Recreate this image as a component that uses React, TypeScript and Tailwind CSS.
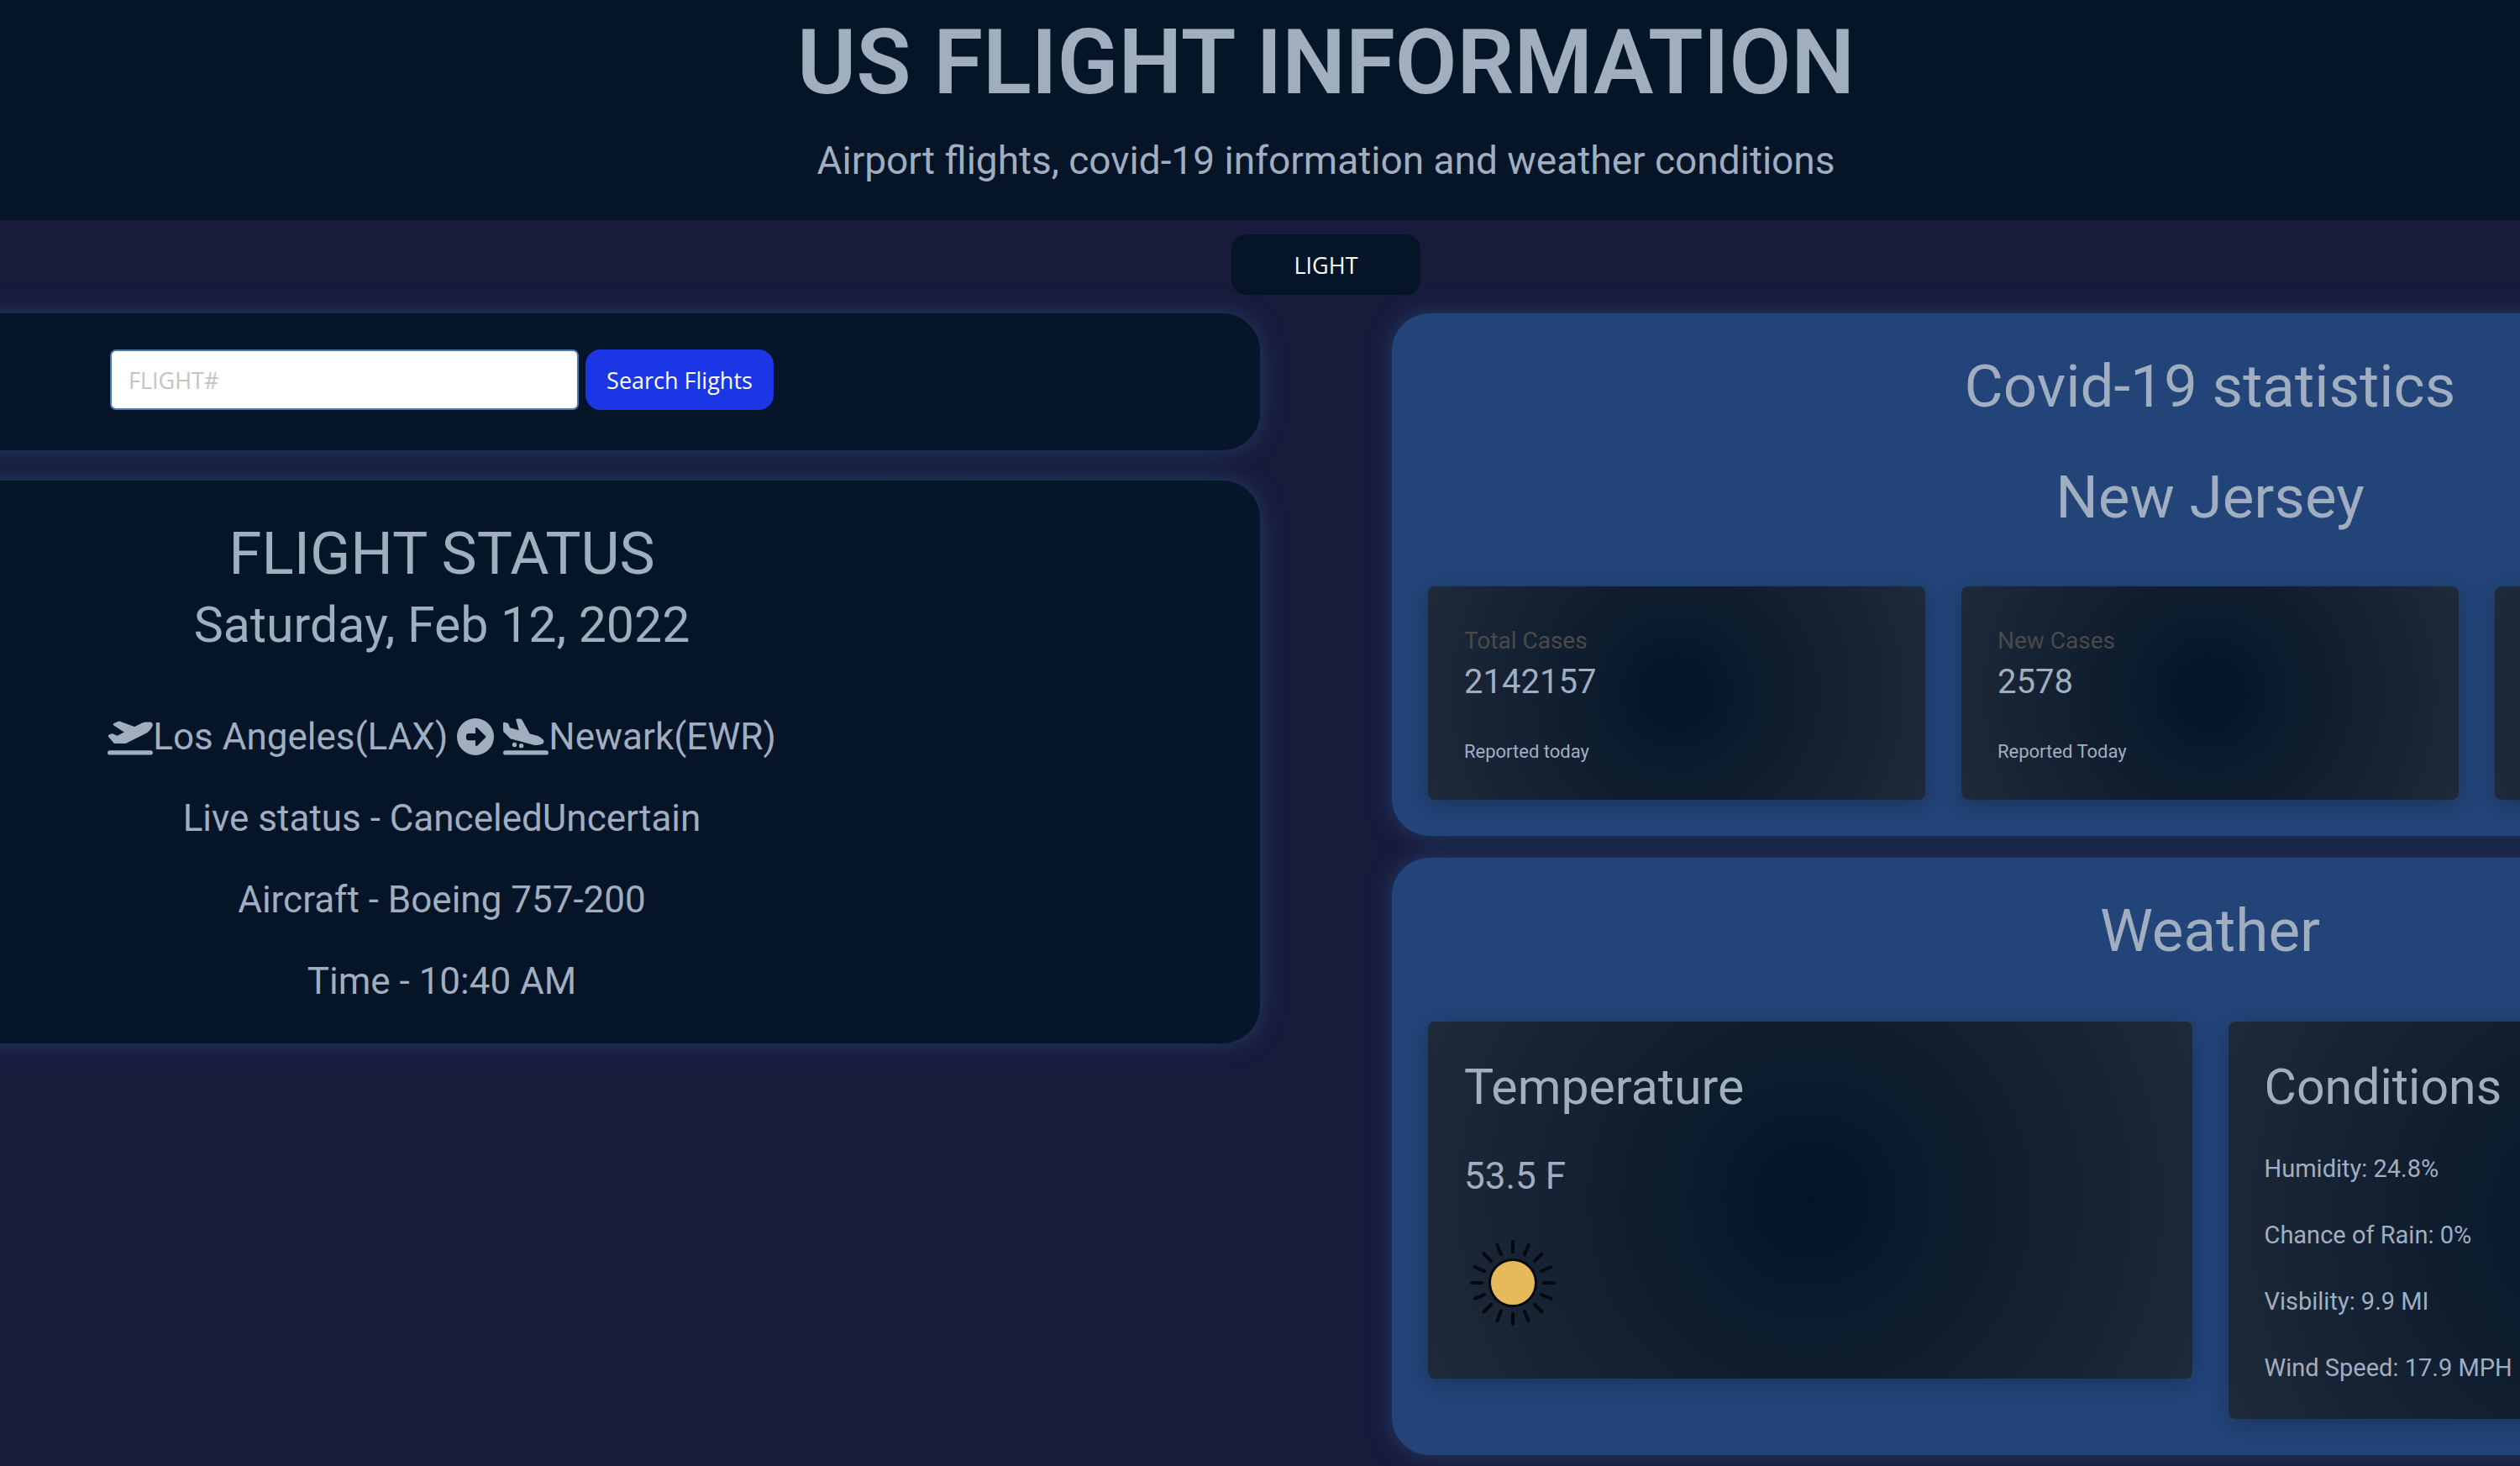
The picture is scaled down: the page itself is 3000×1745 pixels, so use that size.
import type { ReactNode } from "react";
import { FaCircleRight, FaPlaneArrival, FaPlaneDeparture } from "react-icons/fa6";

const headingClass = "text-center text-[71px] leading-[82px]";
const glow = "shadow-[0_0_28px_#203d68]";

function DarkPanel({ children, className }: { children: ReactNode; className: string }) {
  return (
    <section
      className={`rounded-[45px] bg-[radial-gradient(circle,#051427_0%,#07152a_100%)] ${glow} ${className}`}
    >
      {children}
    </section>
  );
}

function BluePanel({ children }: { children: ReactNode }) {
  return (
    <section className={`rounded-[45px] bg-[#224478] px-[43px] pt-[46px] pb-[43px] ${glow}`}>
      {children}
    </section>
  );
}

function Card({ children, className = "" }: { children?: ReactNode; className?: string }) {
  return (
    <div
      className={`rounded-[8px] bg-[radial-gradient(circle,#041428_0%,#1f2a39_100%)] px-[43px] pt-[43px] shadow-[0_6px_26px_rgba(10,10,10,0.25)] ${className}`}
    >
      {children}
    </div>
  );
}

function CaseCard({ label, value, note }: { label: string; value: string; note: string }) {
  return (
    <Card className="pb-[42px]">
      <h3 className="text-[28px] leading-[44px] text-[#4a4a4a]">{label}</h3>
      <p className="text-[40px] leading-[54px]">{value}</p>
      <p className="mt-10 text-[22px] leading-[31px]">{note}</p>
    </Card>
  );
}

const rays = Array.from({ length: 16 }, (_, i) => i * 22.5);

function Sun() {
  return (
    <svg viewBox="-58 -58 116 116" className="mt-[42px] size-[116px]" role="img" aria-label="Sunny">
      <circle r="27.5" fill="#e6b95a" stroke="#05080c" strokeWidth="3" />
      {rays.map((angle) => (
        <line
          key={angle}
          x1="0"
          y1="-36.5"
          x2="0"
          y2="-49"
          stroke="#05080c"
          strokeWidth="4"
          strokeLinecap="round"
          transform={`rotate(${angle})`}
        />
      ))}
    </svg>
  );
}

const details = ["Live status - CanceledUncertain", "Aircraft - Boeing 757-200", "Time - 10:40 AM"];
const conditions = ["Humidity: 24.8%", "Chance of Rain: 0%", "Visbility: 9.9 MI", "Wind Speed: 17.9 MPH"];

export default function App() {
  return (
    <div className="min-h-screen overflow-hidden bg-[#191b3b] font-['Roboto',sans-serif] text-[#a0aec0]">
      <div className="-ml-[500px] w-[calc(100%+1157px)]">
        <header className="bg-[#051427] pt-3 pb-[43px] text-center">
          <h1 className="text-[107px] leading-[126px] font-semibold">US FLIGHT INFORMATION</h1>
          <p className="mt-[25px] text-[46px] leading-[56px]">
            Airport flights, covid-19 information and weather conditions
          </p>
        </header>

        <div className="mt-[17px] flex justify-center font-['Open_Sans',sans-serif]">
          <button
            type="button"
            className="h-[72px] w-[225px] rounded-[18px] bg-[#051427] pt-[2px] text-[27px] text-white"
          >
            LIGHT
          </button>
        </div>

        <main className="mt-[22px] grid grid-cols-2 items-start gap-[157px] px-[52px]">
          <div className="flex flex-col gap-9">
            <DarkPanel className="pt-[43px] pb-12">
              <form
                className="flex justify-center gap-2 font-['Open_Sans',sans-serif] text-[27px]"
                onSubmit={(e) => e.preventDefault()}
              >
                <input
                  type="text"
                  aria-label="Flight number"
                  placeholder="FLIGHT#"
                  className="h-[72px] w-[558px] rounded-[7px] border-2 border-[#4a7ab5] bg-white px-[20px] text-gray-800 placeholder:text-[#c4c4c4]"
                />
                <button
                  type="submit"
                  className="h-[72px] w-[224px] rounded-[18px] bg-[#1b37e5] pt-[2px] text-white"
                >
                  Search Flights
                </button>
              </form>
            </DarkPanel>

            <DarkPanel className="pt-[46px] pb-[47px] text-center">
              <h2 className={headingClass}>FLIGHT STATUS</h2>
              <h3 className="mt-2 text-[59px] leading-[72px]">Saturday, Feb 12, 2022</h3>
              <div className="mt-[70px] flex flex-col gap-[43px] text-[44px] leading-[54px]">
                <p className="flex items-center justify-center">
                  <FaPlaneDeparture className="h-[44px] w-[54px]" />
                  Los Angeles(LAX)
                  <FaCircleRight className="mx-[11px] size-[44px]" />
                  <FaPlaneArrival className="h-[44px] w-[54px]" />
                  Newark(EWR)
                </p>
                {details.map((line) => (
                  <p key={line}>{line}</p>
                ))}
              </div>
            </DarkPanel>
          </div>

          <div className="flex flex-col gap-[26px]">
            <BluePanel>
              <h2 className={headingClass}>Covid-19 statistics</h2>
              <h2 className={`mt-[50px] ${headingClass}`}>New Jersey</h2>
              <div className="mt-[65px] grid grid-cols-3 gap-[43px]">
                <CaseCard label="Total Cases" value="2142157" note="Reported today" />
                <CaseCard label="New Cases" value="2578" note="Reported Today" />
                <Card />
              </div>
            </BluePanel>

            <BluePanel>
              <h2 className={headingClass}>Weather</h2>
              <div className="mt-[67px] grid grid-cols-2 items-start gap-[43px]">
                <Card className="pb-[56px]">
                  <h3 className="text-[59px] leading-[70px]">Temperature</h3>
                  <p className="mt-[44px] text-[44px] leading-[54px]">53.5 F</p>
                  <Sun />
                </Card>
                <Card className="pb-[43px]">
                  <h3 className="text-[59px] leading-[70px]">Conditions</h3>
                  <ul className="mt-[44px] flex flex-col gap-[43px] text-[29px] leading-[36px]">
                    {conditions.map((line) => (
                      <li key={line}>{line}</li>
                    ))}
                  </ul>
                </Card>
              </div>
            </BluePanel>
          </div>
        </main>
      </div>
    </div>
  );
}
